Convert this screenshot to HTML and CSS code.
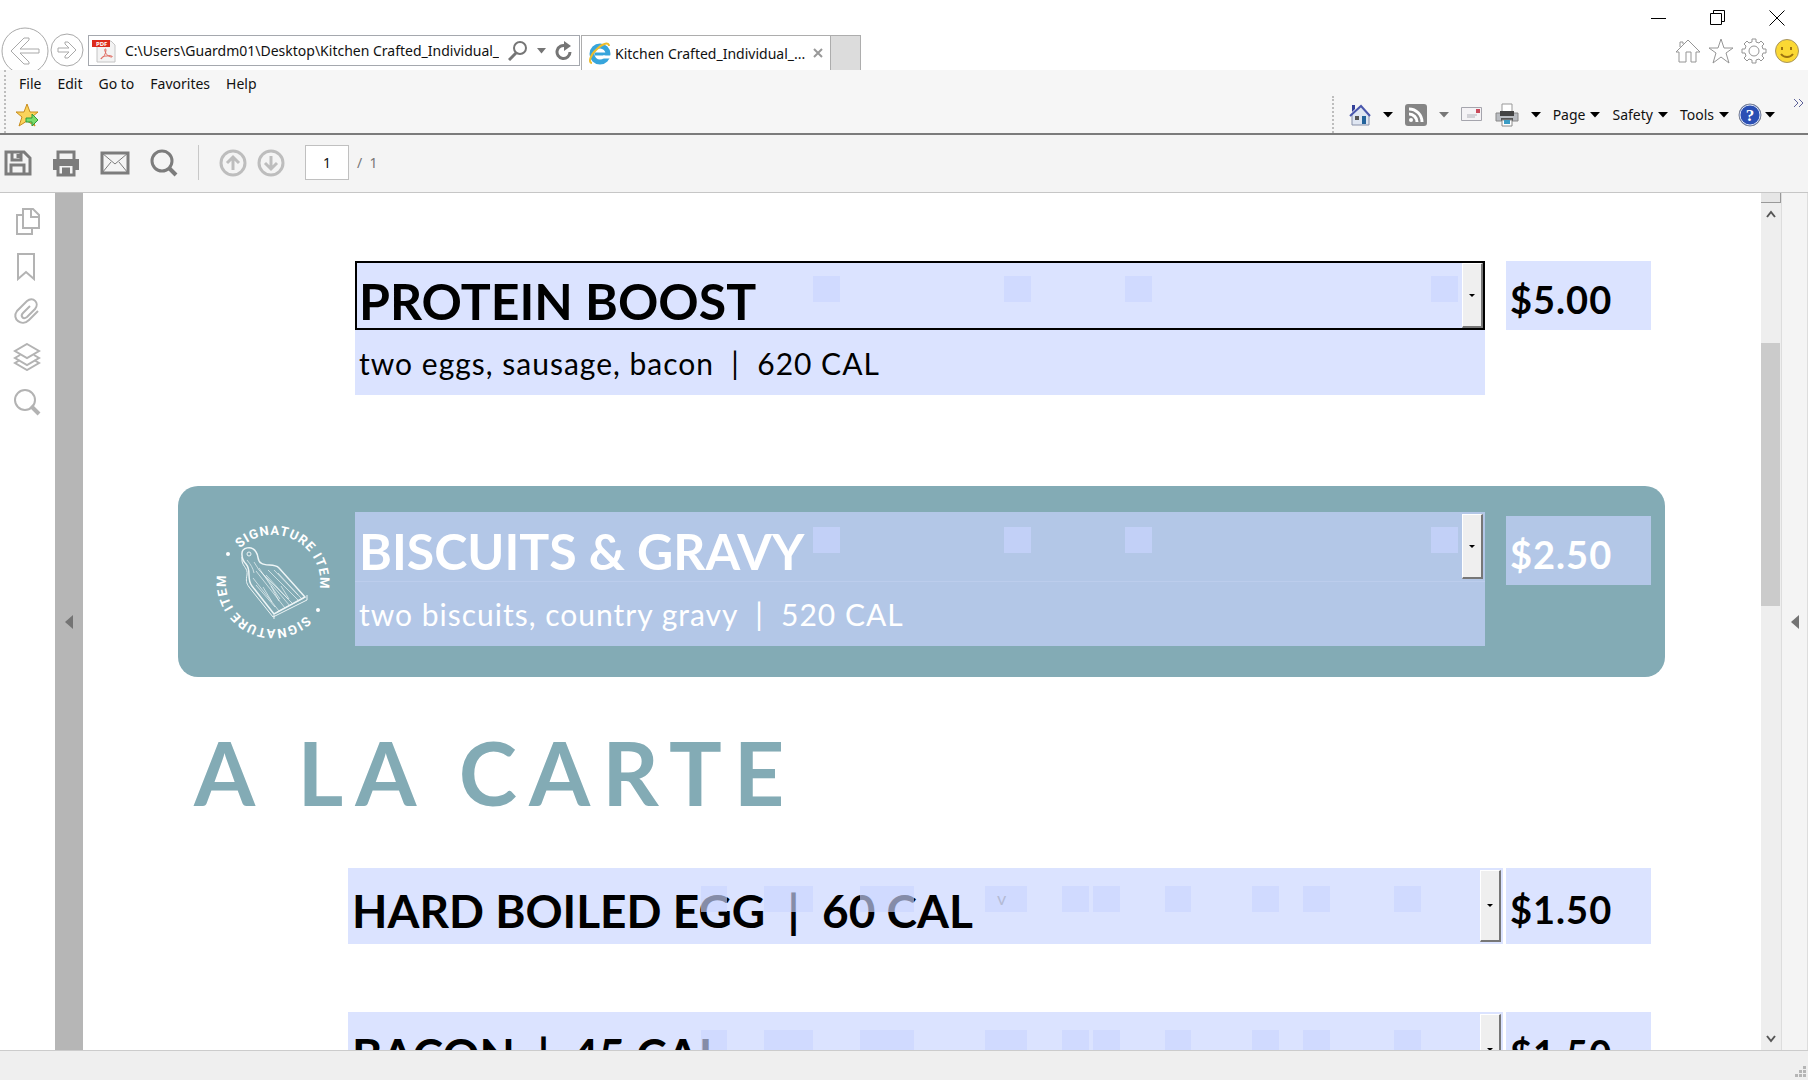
FILE: index.html
```html
<!DOCTYPE html>
<html lang="en">
<head>
    <meta charset="UTF-8" />
    <title>Kitchen Crafted_Individual_Menu</title>
    <link rel="stylesheet" href="styles.css">
</head>
<body>

<!-- window buttons -->
<div class="titlebar">
    <button class="win-btn" aria-label="Minimize"><svg width="16" height="16"><path d="M0 8.500h15" stroke="#000" /></svg></button>
    <button class="win-btn" aria-label="Restore"><svg width="16" height="16" fill="none" stroke="#000"><path d="M.5 3.500h11v11H.5zM3.500 3.500v-3h11v11h-3" /></svg></button>
    <button class="win-btn" aria-label="Close"><svg width="16" height="16" stroke="#000"><path d="M.5 .5l15 15M15.500 .5l-15 15" /></svg></button>
</div>

<!-- address and tab -->
<div class="navbar">
    <button class="back" aria-label="Back">
        <svg width="48" height="48" viewBox="0 0 48 48" fill="#fff" stroke="#a9a9a9"><circle cx="24" cy="24" r="23" /><path d="M10 24l13-13h5v2l-9 9h19v4H19l9 9v2h-5z" /></svg>
    </button>
    <button class="forward" aria-label="Forward">
        <svg width="34" height="34" viewBox="0 0 34 34" fill="#fff" stroke="#a9a9a9"><circle cx="17" cy="17" r="16" /><path d="M26 17l-8-8h-3v2l4 4H8v4h11l-4 4v2h3z" /></svg>
    </button>
    <div class="address">
        <svg width="24" height="24" viewBox="0 0 24 24">
            <path d="M5 2h14l4 4v17H5z" fill="#f3f3f3" stroke="#c4c4c4" />
            <path d="M0 1h18v7H0z" fill="#dc2b1c" />
            <text x="4" y="7" class="pdf-tag">PDF</text>
            <path d="M9 20c2-1 5-5 5-9 0-2-2-1-1 1 1 4 4 6 7 6 1-1-2-2-5-1-3 0-6 1-6 3z" fill="none" stroke="#e06a60" />
        </svg>
        <input type="text" class="url" aria-label="Address" value="C:\Users\Guardm01\Desktop\Kitchen Crafted_Individual_Menu.pdf">
        <button aria-label="Search"><svg width="20" height="20" fill="none" stroke="#757575"><circle cx="12" cy="7" r="6" stroke-width="2" /><path d="M8 12l-7 7" stroke-width="3" /></svg></button>
        <button aria-label="Show addresses"><svg width="9" height="6"><path d="M0 0h9L4.500 5.500z" fill="#757575" /></svg></button>
        <button aria-label="Refresh"><svg width="18" height="20" fill="none"><path d="M11 5a6.500 6.500 0 1 0 4 6" stroke="#757575" stroke-width="3" /><path d="M9 0l7 5-7 5z" fill="#757575" /></svg></button>
    </div>
    <div class="tab">
        <svg width="24" height="24" viewBox="0 0 24 24" fill="none">
            <circle cx="12" cy="13" r="8" stroke="#37a5dc" stroke-width="5" />
            <path d="M7 13h15" stroke="#37a5dc" stroke-width="3" />
            <path d="M15 16h8" stroke="#fff" stroke-width="3" />
            <path d="M21 5c0-4-6-3-12 3C2 14 0 22 4 22" stroke="#efbd2c" stroke-width="2" />
        </svg>
        <span>Kitchen Crafted_Individual_...</span>
        <button aria-label="Close tab"><svg width="10" height="10" stroke="#999" stroke-width="2"><path d="M1 1l8 8M9 1L1 9" /></svg></button>
    </div>
    <button class="new-tab" aria-label="New tab"></button>
    <div class="ie-tools">
        <button aria-label="Home"><svg width="26" height="26" viewBox="0 0 26 26"><path d="M1 14L13 2l12 12h-4v10h-5V14h-5v10H4V14zM5 9V4h3v2" /></svg></button>
        <button aria-label="Favorites"><svg width="26" height="26" viewBox="0 0 26 26"><path d="M13 1l3 9h9l-7 5 3 10-8-6-8 6 3-10-7-5h9z" /></svg></button>
        <button aria-label="Tools"><svg width="26" height="26" viewBox="0 0 26 26"><path d="M11 1h4v3l3 1 2-2 3 3-2 2 1 3h3v4h-3l-1 3 2 2-3 3-2-2-3 1v3h-4v-3l-3-1-2 2-3-3 2-2-1-3H1v-4h3l1-3-2-2 3-3 2 2 3-1z" /><circle cx="13" cy="13" r="5" /></svg></button>
        <button aria-label="Feedback"><svg width="26" height="26" viewBox="0 0 26 26"><circle cx="13" cy="13" r="11.500" class="smile" /><path d="M8 9v3M17 9v3M7 16c3 4 9 4 12 0" stroke="#9c7310" stroke-width="2" /></svg></button>
    </div>
</div>

<div class="bands">
    <div class="menu-side">
        <div class="menubar">
            <button>File</button>
            <button>Edit</button>
            <button>Go to</button>
            <button>Favorites</button>
            <button>Help</button>
        </div>
        <button class="add-fav" aria-label="Add to favorites">
            <svg width="24" height="24" viewBox="0 0 24 24"><path d="M12 1l3 8h8l-6 5 3 9-8-5-8 5 3-9-6-5h8z" fill="#fbd35a" stroke="#c88d1e" /><path d="M11 15h6v-4l6 6-6 6v-4h-6z" fill="#7bdc6b" stroke="#2f9a3b" /></svg>
        </button>
    </div>
    <div class="commands">
        <button class="icon-cmd" aria-label="Home page">
            <svg width="22" height="22" viewBox="0 0 22 22"><path d="M3 10v11h17V10l-8-8z" fill="#dfe6f2" stroke="#8790a8" /><path d="M3 8V1h3v4z" fill="#33409a" /><path d="M1 12L12 2l9 10" fill="none" stroke="#4a57ad" stroke-width="2" /><path d="M6 12h4v4H6z" fill="#555" /><path d="M13 12h4v8h-4z" fill="#23639b" /></svg>
            <svg class="caret" width="10" height="6"><path d="M0 0h10L5 5.500z" /></svg>
        </button>
        <button class="icon-cmd" aria-label="Feeds">
            <svg width="22" height="22" viewBox="0 0 22 22"><rect width="22" height="22" rx="3" fill="#858585" /><circle cx="6" cy="16" r="2" fill="#fff" /><path d="M4 10a8 8 0 0 1 8 8M4 5a13 13 0 0 1 13 13" fill="none" stroke="#fff" stroke-width="3" /></svg>
            <svg class="caret dim" width="10" height="6"><path d="M0 0h10L5 5.500z" /></svg>
        </button>
        <button class="icon-cmd" aria-label="Read mail">
            <svg width="22" height="22" viewBox="0 0 22 22"><path d="M.5 3.500h20v13H.5z" fill="#f4f2f5" stroke="#a5a5ad" /><path d="M15 5h4v4h-4z" fill="#c94a5b" /><path d="M6 11h10M6 13h8" stroke="#b0b0b8" /></svg>
        </button>
        <button class="icon-cmd" aria-label="Print">
            <svg width="24" height="24" viewBox="0 0 24 24"><path d="M7 1h10v8H7z" fill="#fff" stroke="#999" /><path d="M1 10h22v8H1z" fill="#b9bcc1" stroke="#888" /><path d="M5 8h14v5H5z" fill="#444" /><path d="M6 15h12v3H6z" fill="#555" /><path d="M7 17h10v6H7z" fill="#fff" stroke="#8a8a8a" /><path d="M9 17h6v4H9z" fill="#3b9cc4" /></svg>
            <svg class="caret" width="10" height="6"><path d="M0 0h10L5 5.500z" /></svg>
        </button>
        <button>Page<svg class="caret" width="10" height="6"><path d="M0 0h10L5 5.500z" /></svg></button>
        <button>Safety<svg class="caret" width="10" height="6"><path d="M0 0h10L5 5.500z" /></svg></button>
        <button>Tools<svg class="caret" width="10" height="6"><path d="M0 0h10L5 5.500z" /></svg></button>
        <button class="help-cmd" aria-label="Help">
            <svg width="24" height="24" viewBox="0 0 24 24"><circle cx="12" cy="12" r="11" fill="#2a4fb4" stroke="#7b8190" /><circle cx="12" cy="12" r="10" fill="none" stroke="#dfe6f5" /><text x="12" y="18" class="help-mark">?</text></svg>
            <svg class="caret" width="10" height="6"><path d="M0 0h10L5 5.500z" /></svg>
        </button>
        <button class="more" aria-label="More commands"><svg width="12" height="10" fill="none" stroke="#5d6199"><path d="M1 1l4 4-4 4M6 1l4 4-4 4" /></svg></button>
    </div>
</div>

<!-- pdf toolbar -->
<div class="pdf-bar">
    <button aria-label="Save"><svg width="28" height="28" viewBox="0 0 28 28"><path d="M2 3h18l6 6v16H2zM8 3v8h9V3M7 25v-9h13v9M14 5v4" /></svg></button>
    <button aria-label="Print file"><svg width="28" height="28" viewBox="0 0 28 28"><path d="M6 10V3h16v7" /><path d="M1 10h26v11h-4v-4H5v4H1z" fill="#7c7c7c" stroke="none" /><path d="M6 17v9h16v-9M10 20h8M10 23h8" /></svg></button>
    <button aria-label="Email"><svg width="30" height="28" viewBox="0 0 30 28"><path d="M2 4h26v20H2z" /><path d="M2 4l13 11L28 4M2 24l9-11M28 24l-9-11" stroke-width="1" /></svg></button>
    <button aria-label="Find"><svg width="28" height="28" viewBox="0 0 28 28"><circle cx="12" cy="12" r="10" /><path d="M19 19l7 7" stroke-width="4" /></svg></button>
    <span class="divider"></span>
    <button class="off" aria-label="Previous page"><svg width="28" height="28" viewBox="0 0 28 28"><circle cx="14" cy="14" r="12" /><path d="M14 21V8M8 14l6-6 6 6" /></svg></button>
    <button class="off" aria-label="Next page"><svg width="28" height="28" viewBox="0 0 28 28"><circle cx="14" cy="14" r="12" /><path d="M14 7v13M8 14l6 6 6-6" /></svg></button>
    <input type="text" id="page" class="page-no" aria-label="Page" value="1">
    <label for="page" class="page-total">/&nbsp; 1</label>
</div>

<div class="viewer">
    <div class="rail">
        <button aria-label="Pages"><svg width="28" height="28" viewBox="0 0 28 28"><path d="M10 1h10l6 6v13H10zM18 1v8h8M9 7H4v19h15v-5" /></svg></button>
        <button aria-label="Bookmarks"><svg width="28" height="28" viewBox="0 0 28 28"><path d="M5 1h16v25l-8-7-8 7z" /></svg></button>
        <button aria-label="Attachments"><svg width="28" height="28" viewBox="0 0 28 28"><path d="M25 13l-9 9c-7 7-18-1-12-9L14 3c6-5 13 2 8 8l-8 8c-4 3-7-1-4-4l7-7" /></svg></button>
        <button aria-label="Layers"><svg width="28" height="28" viewBox="0 0 28 28"><path d="M14 1l12 7-12 7L2 8zM7 12l-5 3 12 7 12-7-5-3M7 17l-5 3 12 7 12-7-5-3" /></svg></button>
        <button aria-label="Search document"><svg width="28" height="28" viewBox="0 0 28 28"><circle cx="12" cy="12" r="10" /><path d="M18 18l8 8" stroke-width="4" /></svg></button>
    </div>
    <button class="gutter" aria-label="Open panel"><svg width="8" height="14"><path d="M8 0v14L0 7z" /></svg></button>

    <main class="sheet">
        <div class="item">
            <div class="dish">
                <div class="combo focused">
                    <select aria-label="Dish 1"><option>PROTEIN BOOST</option></select>
                    <svg class="marks" height="26"><path d="M458 0h27v26h-27zM649 0h27v26h-27zM770 0h27v26h-27zM1076 0h27v26h-27z" /></svg>
                    <span class="arrow"></span>
                </div>
                <input type="text" class="desc" aria-label="Description 1" value="two eggs, sausage, bacon&nbsp; |&nbsp; 620 CAL">
            </div>
            <input type="text" class="price" aria-label="Price 1" value="$5.00">
        </div>

        <div class="item signature">
            <svg class="badge" width="177" height="191" viewBox="-95 -96 177 191">
                <path id="ring1" d="M-40 -25A47 47 0 0 1 40 25" fill="none" />
                <path id="ring2" d="M40 25A47 47 0 0 1 -40 -25" fill="none" />
                <text><textPath href="#ring1" startOffset="11">SIGNATURE ITEM</textPath><textPath href="#ring2" startOffset="11">SIGNATURE ITEM</textPath></text>
                <circle cx="-45" cy="-28" r="2" fill="#fff" />
                <circle cx="45" cy="28" r="2" fill="#fff" />
                <g fill="none" stroke="#eef5f6">
                    <path d="M-31 -27c-1-8 10-10 14-3 3 4 1 9 5 11 5 4 13 0 18 5l26 29-31 17-22-28c-6-8 0-15-6-22-3-3-4-5-4-9z" stroke-width="1.500" />
                    <path d="M-31 -25v4c1 6 6 7 5 14-1 5-1 8 2 12l24 30 34-17v-5M1 33v4" />
                    <circle cx="-24" cy="-28" r="2" />
                    <path d="M-26 -22c4 5 6 8 7 13M-19 -20l5 8 34 34M-20 -4L6 29M-17 -11L12 26M-12 -10l29 34M-5 -12l31 31M1 -12l28 29M-10 5l9 15M-2 4l8 15M-17 3L2 25M8 4l8 13" stroke-width=".7" />
                    <path d="M-14 -14L7 17M-7 -7l22 24M5 -9l20 22M4 30l27-14" stroke-width=".7" />
                </g>
            </svg>
            <div class="dish">
                <div class="combo">
                    <select aria-label="Dish 2"><option>BISCUITS &amp; GRAVY</option></select>
                    <svg class="marks" height="26"><path d="M458 0h27v26h-27zM649 0h27v26h-27zM770 0h27v26h-27zM1076 0h27v26h-27z" /></svg>
                    <span class="arrow"></span>
                </div>
                <input type="text" class="desc" aria-label="Description 2" value="two biscuits, country gravy&nbsp; |&nbsp; 520 CAL">
            </div>
            <input type="text" class="price" aria-label="Price 2" value="$2.50">
        </div>

        <h1>A LA CARTE</h1>

        <div class="item side">
            <div class="dish">
                <div class="combo">
                    <select aria-label="Side 1"><option>HARD BOILED EGG&nbsp; |&nbsp; 60 CAL</option></select>
                    <svg class="marks" height="26"><path d="M353 0h26v26h-26zM416 0h49v26h-49zM512 0h54v26h-54zM637 0h42v26h-42zM714 0h27v26h-27zM745 0h27v26h-27zM817 0h26v26h-26zM904 0h27v26h-27zM955 0h27v26h-27zM1046 0h27v26h-27z" /><text x="649" y="19">v</text></svg>
                    <span class="arrow"></span>
                </div>
            </div>
            <input type="text" class="price" aria-label="Side price 1" value="$1.50">
        </div>

        <div class="item side">
            <div class="dish">
                <div class="combo">
                    <select aria-label="Side 2"><option>BACON&nbsp; |&nbsp; 45 CAL</option></select>
                    <svg class="marks" height="26"><path d="M353 0h26v26h-26zM416 0h49v26h-49zM512 0h54v26h-54zM637 0h42v26h-42zM714 0h27v26h-27zM745 0h27v26h-27zM817 0h26v26h-26zM904 0h27v26h-27zM955 0h27v26h-27zM1046 0h27v26h-27z" /></svg>
                    <span class="arrow"></span>
                </div>
            </div>
            <input type="text" class="price" aria-label="Side price 2" value="$1.50">
        </div>
    </main>

    <div class="scrollbar">
        <span class="split"></span>
        <svg width="10" height="8"><path d="M1 7l4-5 4 5" /></svg>
        <div class="track"><div class="thumb"></div></div>
        <svg width="10" height="8"><path d="M1 1l4 5 4-5" /></svg>
    </div>
    <button class="right-panel" aria-label="Open tools"><svg width="8" height="14"><path d="M8 0v14L0 7z" /></svg></button>
</div>

<div class="status">
    <svg width="12" height="12" fill="#b5b5b5"><path d="M8 0h3v3H8zM4 4h3v3H4zM8 4h3v3H8zM0 8h3v3H0zM4 8h3v3H4zM8 8h3v3H8z" /></svg>
</div>

</body>
</html>
```

FILE: styles.css
```css
* {
    box-sizing: border-box;
}

body {
    margin: 0;
    height: 100vh;
    display: flex;
    flex-direction: column;
    overflow: hidden;
    background: #fff;
    color: #111;
    font-family: "Noto Sans", "Open Sans", sans-serif;
    font-size: 14px;
}

button {
    display: flex;
    align-items: center;
    padding: 0;
    border: none;
    background: none;
    color: inherit;
    font: inherit;
}

input, select {
    min-width: 0;
    margin: 0;
    padding: 0;
    border: none;
    border-radius: 0;
    background: none;
    color: inherit;
    font: inherit;
    outline: none;
}

svg {
    display: block;
    flex: none;
}

/* browser chrome */
.titlebar {
    height: 27px;
    flex: none;
    display: flex;
    justify-content: flex-end;
    gap: 43px;
    padding: 10px 23px 0 0;
}

.win-btn {
    height: 16px;
}

.navbar {
    height: 43px;
    flex: none;
    display: flex;
    align-items: flex-start;
    padding-left: 1px;
    overflow: hidden;
}

.forward {
    margin: 6px 4px 0 1px;
}

.address {
    width: 492px;
    height: 31px;
    margin-top: 8px;
    padding: 0 6px 0 3px;
    display: flex;
    align-items: center;
    gap: 9px;
    border: 1px solid #a5a8ae;
}

.url {
    flex: 1;
}

.tab {
    width: 250px;
    height: 35px;
    margin: 8px 0 0 1px;
    padding: 0 7px 0 6px;
    display: flex;
    align-items: center;
    gap: 3px;
    border: 1px solid #adadad;
    border-bottom: none;
}

.tab span {
    flex: 1;
    white-space: nowrap;
}

.new-tab {
    width: 30px;
    height: 35px;
    margin-top: 8px;
    background: #dcdcdc;
    border: 1px solid #adadad;
    border-width: 1px 1px 0 0;
}

.ie-tools {
    display: flex;
    gap: 7px;
    margin: 11px 8px 0 auto;
}

.ie-tools svg {
    fill: #fff;
    stroke: #959595;
}

.ie-tools .smile {
    fill: #fbd834;
    stroke: #a89560;
}

.ie-tools .smile + path {
    fill: none;
}

.pdf-tag {
    font-size: 6px;
    font-weight: bold;
    fill: #fff;
}

.bands {
    height: 65px;
    flex: none;
    display: flex;
    justify-content: space-between;
    background: #f6f6f6;
    border-bottom: 2px solid #7b7b7b;
}

.menu-side {
    margin-left: 4px;
    padding-left: 9px;
    border-left: 2px dotted #bdbdbd;
}

.menubar {
    height: 27px;
    display: flex;
    gap: 16px;
    padding-left: 4px;
}

.add-fav {
    margin-top: 6px;
}

.commands {
    display: flex;
    align-items: center;
    gap: 12px;
    margin-top: 26px;
    padding: 0 3px 0 15px;
    border-left: 2px dotted #bdbdbd;
}

.commands button {
    gap: 5px;
}

.commands .icon-cmd {
    gap: 12px;
}

.commands .help-cmd {
    gap: 3px;
    margin-left: -3px;
}

.more {
    align-self: flex-start;
    margin: 2px 0 0 6px;
}

.caret.dim {
    fill: #777;
}

.help-mark {
    fill: #fff;
    font: bold 17px "Liberation Serif", serif;
    text-anchor: middle;
}

/* pdf toolbar */
.pdf-bar {
    height: 58px;
    flex: none;
    display: flex;
    align-items: center;
    gap: 20px;
    padding: 0 4px 2px;
    background: #f4f4f4;
    border-bottom: 1px solid #c6c6c6;
}

.pdf-bar svg {
    fill: none;
    stroke: #7c7c7c;
    stroke-width: 3;
}

.pdf-bar .off svg {
    stroke: #bdbdbd;
}

.pdf-bar .off + .off {
    margin-left: -10px;
}

.divider {
    width: 1px;
    height: 35px;
    background: #c8c8c8;
}

.page-no {
    width: 44px;
    height: 35px;
    background: #fff;
    border: 1px solid #c0c0c0;
    text-align: center;
}

.page-total {
    margin-left: -12px;
    color: #777;
}

/* document area */
.viewer {
    flex: 1;
    min-height: 0;
    display: flex;
}

.rail {
    width: 55px;
    flex: none;
    display: flex;
    flex-direction: column;
    gap: 17px;
    padding: 15px 0 0 13px;
}

.rail svg {
    fill: none;
    stroke: #b3b3b3;
    stroke-width: 2;
}

.gutter {
    width: 28px;
    flex: none;
    justify-content: center;
    background: #b6b6b6;
}

.gutter svg, .right-panel svg {
    fill: #747474;
}

.sheet {
    flex: 1;
    min-width: 0;
    padding: 68px 96px 0 95px;
    overflow: hidden;
    font-family: Lato, sans-serif;
    color: #000;
}

.item {
    display: flex;
    align-items: flex-start;
    gap: 21px;
    padding: 0 14px 0 177px;
}

.dish {
    flex: 1;
    min-width: 0;
}

.combo {
    position: relative;
    height: 69px;
    background: #dbe3ff;
}

.combo select {
    appearance: none;
    display: block;
    width: 100%;
    height: 100%;
    padding: 9px 0 0 4px;
    font-size: 50px;
    font-weight: bold;
    line-height: 60px;
}

.combo.focused select {
    padding: 8px 0 0 2px;
    border: 2px solid #000;
}

.marks {
    position: absolute;
    top: 15px;
    left: 0;
    width: 100%;
    fill: rgba(202, 212, 255, 0.66);
}

.marks text {
    fill: #b4bbd5;
    font-size: 18px;
}

.arrow {
    position: absolute;
    top: 2px;
    right: 2px;
    bottom: 2px;
    width: 21px;
    display: grid;
    place-items: center;
    background: #efefef;
    border: 1px solid #fff;
    border-width: 1px 2px 2px 1px;
    border-right-color: #777;
    border-bottom-color: #777;
    pointer-events: none;
}

.arrow::after {
    content: "";
    border: 3px solid transparent;
    border-top-color: #000;
    border-bottom: none;
}

.desc {
    display: block;
    width: 100%;
    height: 65px;
    padding: 0 0 0 4px;
    background: #dbe3ff;
    font-size: 30px;
    letter-spacing: 1px;
}

.price {
    width: 145px;
    height: 69px;
    padding: 6px 0 0 4px;
    background: #dbe3ff;
    font-size: 38px;
    font-weight: bold;
    letter-spacing: 1px;
}

.signature {
    gap: 0;
    height: 191px;
    margin-top: 91px;
    padding-left: 0;
    background: #83abb5;
    border-radius: 20px;
    color: #fff;
}

.signature .dish {
    margin: 26px 21px 0 0;
}

.signature .price {
    margin-top: 30px;
}

.signature .combo, .signature .desc, .signature .price {
    background: #b3c7e7;
}

.signature .desc {
    border-top: 1px solid #bccdec;
}

.badge text {
    fill: #fff;
    font: bold 13px Roboto, sans-serif;
    letter-spacing: 1px;
}

h1 {
    height: 191px;
    margin: 0;
    padding-left: 16px;
    color: #83abb5;
    font-size: 88px;
    line-height: 191px;
    letter-spacing: 12px;
    white-space: nowrap;
}

.side {
    gap: 3px;
    margin-bottom: 68px;
    padding-left: 170px;
}

.side .combo, .side .price {
    height: 76px;
}

.side .combo select {
    font-size: 46px;
}

.side .marks {
    top: 18px;
}

/* scrollbar and tools strip */
.scrollbar {
    width: 20px;
    flex: none;
    display: flex;
    flex-direction: column;
    align-items: center;
    background: #eee;
    padding-bottom: 7px;
}

.scrollbar svg {
    fill: none;
    stroke: #555;
    stroke-width: 2;
}

.split {
    width: 100%;
    height: 10px;
    margin-bottom: 7px;
    background: #e6e6e6;
    border: solid #999;
    border-width: 0 1px 1px 0;
}

.track {
    flex: 1;
    width: 100%;
    padding-top: 125px;
}

.thumb {
    width: 19px;
    height: 38%;
    max-height: 266px;
    background: #cbcbcb;
}

.right-panel {
    width: 27px;
    flex: none;
    justify-content: center;
    background: #f4f4f4;
    border: solid #ddd;
    border-width: 0 1px;
}

.status {
    height: 30px;
    flex: none;
    display: flex;
    justify-content: flex-end;
    align-items: flex-end;
    padding: 0 1px 2px 0;
    background: #efefef;
    border-top: 1px solid #ccc;
}
```
